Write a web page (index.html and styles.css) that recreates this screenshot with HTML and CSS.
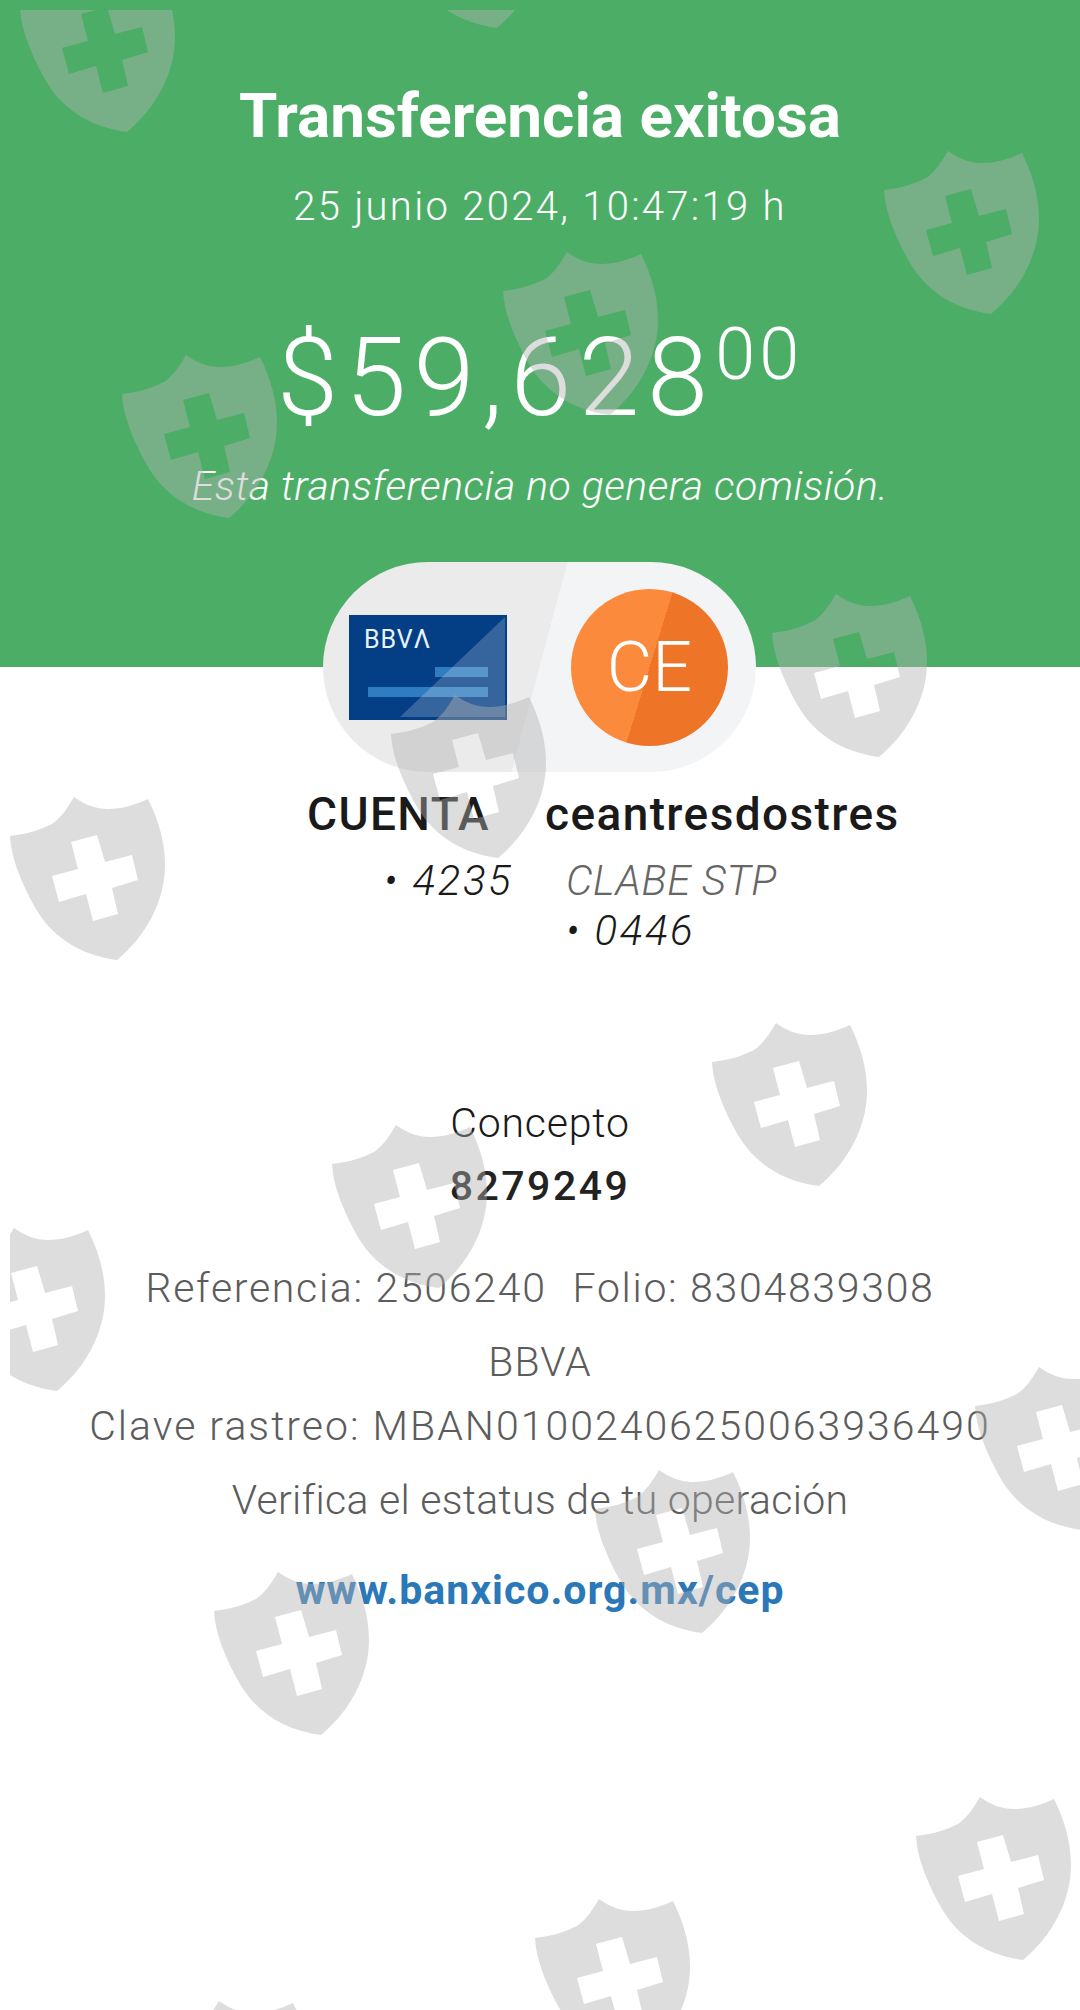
FILE: index.html
```html
<!doctype html>
<html lang="es">
    <head>
        <meta charset="UTF-8" />
        <meta name="viewport" content="width=device-width, initial-scale=1.0" />
        <title>Transferencia exitosa</title>
        <link rel="stylesheet" href="styles.css">
    </head>
    <body>
        <div class="receipt">
            <div class="hero">
                <h1>Transferencia exitosa</h1>
                <div class="date">25 junio 2024, 10:47:19 h</div>
                <div class="amount">$59,628<sup>00</sup></div>
                <div class="note">Esta transferencia no genera comisión.</div>
            </div>

            <div class="pill">
                <div class="card">
                    <span class="card-brand">BBVΛ</span>
                    <svg class="card-art" viewBox="0 0 158 105">
                        <rect x="86" y="52" width="53" height="10" fill="#2f7cc0" />
                        <rect x="19" y="72" width="120" height="10" fill="#2f7cc0" />
                        <polygon points="156,2 156,102 51,102" fill="#fff" fill-opacity="0.2" />
                    </svg>
                </div>
                <div class="avatar">CE</div>
            </div>

            <div class="accounts">
                <div class="account account-from">
                    <div class="account-name">CUENTA</div>
                    <div class="account-number">• 4235</div>
                </div>
                <div class="account account-to">
                    <div class="account-name">ceantresdostres</div>
                    <div class="account-type">CLABE STP</div>
                    <div class="account-number">• 0446</div>
                </div>
            </div>

            <div class="concept">
                <div class="concept-label">Concepto</div>
                <div class="concept-value">8279249</div>
            </div>

            <div class="details">
                <div class="details-refs">
                    <span>Referencia: 2506240</span>
                    <span>Folio: 8304839308</span>
                </div>
                <div class="details-bank">BBVA</div>
                <div class="details-trace">Clave rastreo: MBAN01002406250063936490</div>
                <div class="details-verify">Verifica el estatus de tu operación</div>
                <a class="details-link" href="#">www.banxico.org.mx/cep</a>
            </div>
        </div>

        <svg class="watermark" viewBox="10 10 1070 2000">
            <defs>
                <path id="shield" fill-rule="evenodd" d="M64 0C75 8 86 12 98 12C112 12 125 8 138 2C149 24 155 46 155 68C155 105 135 140 107 163C70 158 40 140 22 105C10 82 1 60 0 39C18 37 32 32 42 27C52 20 58 10 64 0ZM61 45L68 72L42 79L49 105L76 97L83 124L108 117L102 91L128 83L122 58L95 65L87 38Z" />
            </defs>
            <use href="#shield" x="20" y="-31" />
            <use href="#shield" x="390" y="-135" />
            <use href="#shield" x="884" y="151" />
            <use href="#shield" x="503" y="252" />
            <use href="#shield" x="122" y="355" />
            <use href="#shield" x="772" y="594" />
            <use href="#shield" x="391" y="695" />
            <use href="#shield" x="10" y="797" />
            <use href="#shield" x="712" y="1023" />
            <use href="#shield" x="332" y="1125" />
            <use href="#shield" x="-50" y="1228" />
            <use href="#shield" x="975" y="1367" />
            <use href="#shield" x="595" y="1470" />
            <use href="#shield" x="214" y="1572" />
            <use href="#shield" x="916" y="1797" />
            <use href="#shield" x="535" y="1899" />
            <use href="#shield" x="155" y="2001" />
        </svg>
    </body>
</html>
```

FILE: styles.css
```css
body {
    margin: 0;
    font-family: Roboto, "Liberation Sans", sans-serif;
    background-color: #ffffff;
    color: #1a1a1a;
    overflow: hidden;
}
.receipt {
    height: 2010px;
    box-sizing: border-box;
    background: linear-gradient(#4cae66 667px, #ffffff 667px);
    display: flex;
    flex-direction: column;
    align-items: center;
}
.hero {
    height: 562px;
    box-sizing: border-box;
    padding-top: 83px;
    display: flex;
    flex-direction: column;
    align-items: center;
    color: #ffffff;
}
.hero h1 {
    margin: 0;
    font-size: 62px;
    line-height: 66px;
    font-weight: 700;
}
.date {
    margin-top: 34px;
    font-size: 40px;
    line-height: 48px;
    font-weight: 300;
    letter-spacing: 2.3px;
}
.amount {
    margin-top: 87px;
    font-size: 110px;
    line-height: 120px;
    font-weight: 300;
    letter-spacing: 7.3px;
}
.amount sup {
    font-size: 72px;
    line-height: 0;
    vertical-align: 36px;
    letter-spacing: 4px;
}
.note {
    margin-top: 23px;
    font-size: 41px;
    line-height: 50px;
    font-weight: 300;
    font-style: italic;
    letter-spacing: 0.5px;
}
.pill {
    width: 433px;
    height: 210px;
    margin-right: 1px;
    border-radius: 105px;
    background: linear-gradient(105deg, #ebebeb 50%, #f3f4f6 50%);
    display: flex;
    align-items: center;
    padding-left: 26px;
    box-sizing: border-box;
}
.card {
    position: relative;
    width: 158px;
    height: 105px;
    background-color: #043f86;
}
.card-brand {
    position: absolute;
    left: 15px;
    top: 10px;
    font-size: 25px;
    line-height: 30px;
    letter-spacing: 1px;
    color: #e8f2fb;
}
.card-art {
    display: block;
    width: 158px;
    height: 105px;
}
.avatar {
    margin-left: 64px;
    width: 157px;
    height: 157px;
    border-radius: 50%;
    background: linear-gradient(107deg, #fb8a3c 50%, #ee7428 50%);
    color: #ffffff;
    font-size: 70px;
    font-weight: 300;
    display: flex;
    align-items: center;
    justify-content: center;
}
.accounts {
    width: 1080px;
    padding-top: 15px;
    display: flex;
    box-sizing: border-box;
    padding-left: 307px;
    gap: 34px;
}
.account {
    font-size: 42px;
    line-height: 50px;
    font-style: italic;
    font-weight: 300;
    white-space: nowrap;
}
.account-from {
    width: 204px;
}
.account-name {
    margin-bottom: 15px;
    font-size: 46px;
    line-height: 54px;
    font-style: normal;
    font-weight: 500;
    letter-spacing: 1.4px;
}
.account-number {
    letter-spacing: 2.6px;
}
.account-from .account-number {
    padding-left: 77px;
}
.account-to .account-type,
.account-to .account-number {
    padding-left: 21px;
}
.account-type {
    color: #666666;
    letter-spacing: 0.6px;
}
.concept {
    margin-top: 136px;
    text-align: center;
    font-size: 41px;
    line-height: 63px;
}
.concept-label {
    font-weight: 300;
    letter-spacing: 0.8px;
}
.concept-value {
    font-weight: 500;
    letter-spacing: 2.5px;
    color: #222222;
}
.details {
    margin-top: 38px;
    display: flex;
    flex-direction: column;
    align-items: center;
    font-size: 41px;
    line-height: 64px;
    font-weight: 300;
    color: #5c5c5c;
}
.details-refs {
    display: flex;
    gap: 26px;
    letter-spacing: 1.7px;
}
.details-bank {
    margin-top: 10px;
    letter-spacing: 1px;
}
.details-trace {
    letter-spacing: 2px;
}
.details-verify {
    margin-top: 10px;
    letter-spacing: 0.3px;
}
.details-link {
    margin-top: 26px;
    font-weight: 700;
    color: #2a78b8;
    text-decoration: none;
    letter-spacing: 1px;
}
.watermark {
    position: absolute;
    left: 10px;
    top: 10px;
    width: 1070px;
    height: 2000px;
    fill: rgb(176, 176, 176);
    fill-opacity: 0.43;
    pointer-events: none;
}
```
